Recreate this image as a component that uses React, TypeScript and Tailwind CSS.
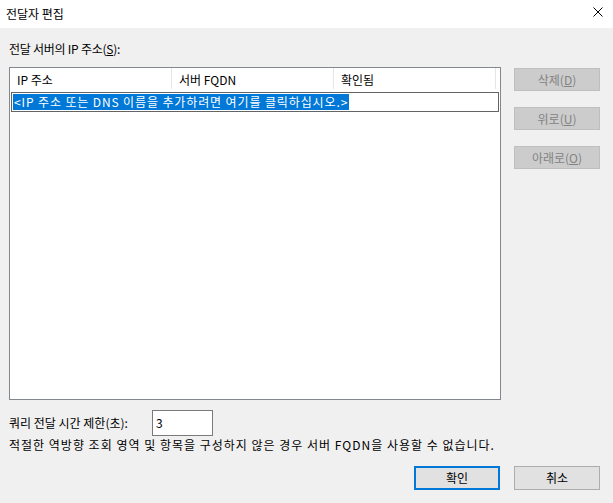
import React from "react";

const font = { fontFamily: '"Noto Sans CJK KR", "Noto Sans", sans-serif' };

function DisabledButton({ label, k }: { label: string; k: string }) {
  return (
    <div className="w-[86px] h-[23px] bg-[#cccccc] border border-[#bfbfbf] flex items-center justify-center text-[12px] leading-[16px] text-[#838383]">
      <span>
        {label}(<span className="underline">{k}</span>)
      </span>
    </div>
  );
}

export default function App() {
  return (
    <div
      className="w-[613px] h-[503px] bg-[#f0f0f0] text-black text-[12px] leading-[16px] overflow-hidden"
      style={font}
    >
      <div className="h-[28px] bg-white flex items-center justify-between pl-[6px] pr-[10px]">
        <span className="text-[12px] leading-[16px] mt-[-1px]">전달자 편집</span>
        <svg width="10" height="10" viewBox="0 0 10 10" className="mt-[-4px]">
          <path d="M0.5 0.5 L9.5 9.5 M9.5 0.5 L0.5 9.5" stroke="#000" strokeWidth="1" />
        </svg>
      </div>
      <div className="pl-[9px]">
        <div className="pt-[13px] h-[39px] leading-[16px] tracking-[-0.25px]">
          전달 서버의 IP 주소(<span className="underline">S</span>):
        </div>
        <div className="flex">
          <div className="w-[492px] h-[333px] bg-white border border-[#828790] flex flex-col">
            <div className="h-[21px] flex">
              <div className="w-[162px] border-r border-[#e5e5e5] pl-[7px] pt-[4px]">IP 주소</div>
              <div className="w-[162px] border-r border-[#e5e5e5] pl-[7px] pt-[4px]">서버 FQDN</div>
              <div className="w-[162px] border-r border-[#e5e5e5] pl-[7px] pt-[4px]">확인됨</div>
            </div>
            <div className="ml-[1px] mt-[3px] w-[488px] h-[20px] border border-[#646464] flex items-center pl-[1px]">
              <span className="bg-[#0078d7] text-white h-[16px] leading-[16px] px-[1px] tracking-[0.88px]">
                &lt;IP 주소 또는 DNS 이름을 추가하려면 여기를 클릭하십시오.&gt;
              </span>
            </div>
          </div>
          <div className="ml-[13px] mt-[1px] flex flex-col gap-[16px]">
            <DisabledButton label="삭제" k="D" />
            <DisabledButton label="위로" k="U" />
            <DisabledButton label="아래로" k="O" />
          </div>
        </div>
        <div className="mt-[10px] h-[26px] flex items-center">
          <span className="w-[143px]">쿼리 전달 시간 제한(초):</span>
          <div className="w-[61px] h-[26px] bg-white border border-[#7a7a7a] flex items-center pl-[3px]">3</div>
        </div>
        <div className="mt-[1px] leading-[16px] tracking-[1px]">
          적절한 역방향 조회 영역 및 항목을 구성하지 않은 경우 서버 FQDN을 사용할 수 없습니다.
        </div>
        <div className="mt-[13px] flex justify-end gap-[14px] pr-[13px]">
          <div className="w-[86px] h-[24px] bg-[#e1e1e1] border-2 border-[#0078d7] flex items-center justify-center">확인</div>
          <div className="w-[86px] h-[24px] bg-[#e1e1e1] border border-[#adadad] flex items-center justify-center">취소</div>
        </div>
      </div>
    </div>
  );
}
